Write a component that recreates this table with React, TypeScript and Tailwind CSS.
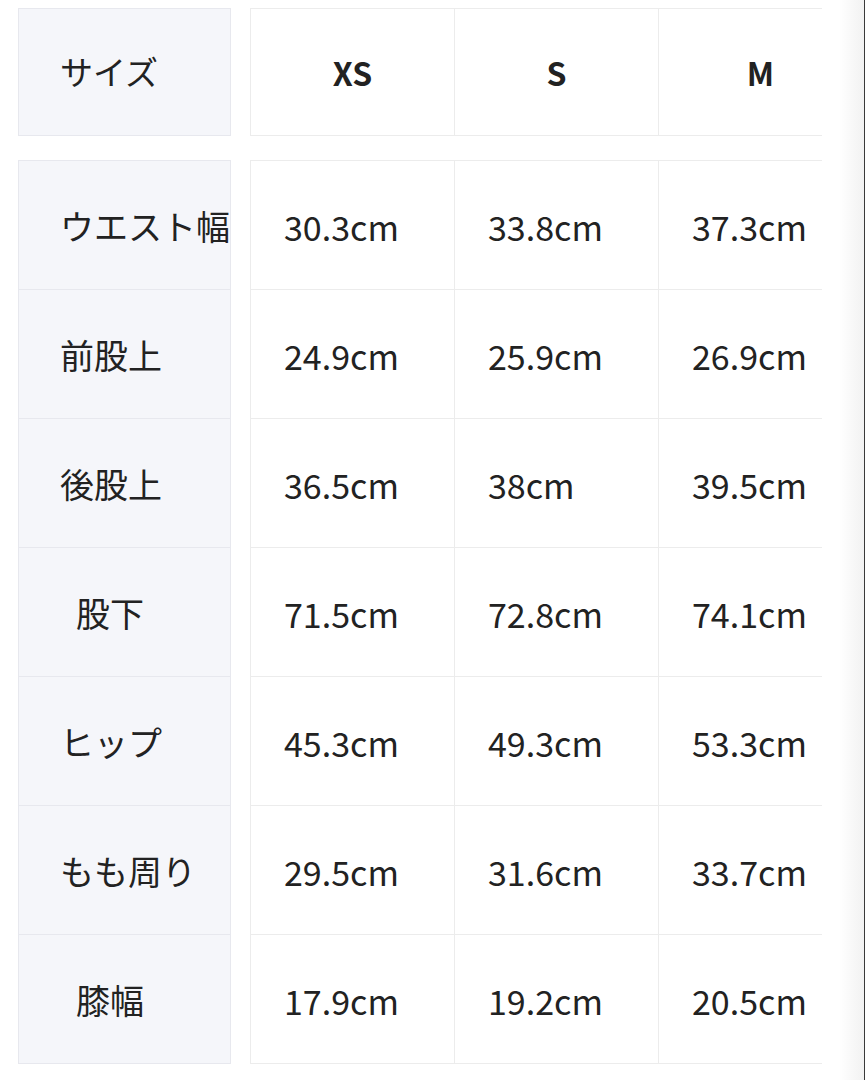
const sizes = ["XS", "S", "M"];

type Row = { label: string; values: string[] };

const rows: Row[] = [
  { label: "ウエスト幅", values: ["30.3cm", "33.8cm", "37.3cm"] },
  { label: "前股上", values: ["24.9cm", "25.9cm", "26.9cm"] },
  { label: "後股上", values: ["36.5cm", "38cm", "39.5cm"] },
  { label: "股下", values: ["71.5cm", "72.8cm", "74.1cm"] },
  { label: "ヒップ", values: ["45.3cm", "49.3cm", "53.3cm"] },
  { label: "もも周り", values: ["29.5cm", "31.6cm", "33.7cm"] },
  { label: "膝幅", values: ["17.9cm", "19.2cm", "20.5cm"] },
];

const font = { fontFamily: '"Noto Sans CJK JP", "Noto Sans", sans-serif' };

function LabelCell({ text }: { text: string }) {
  return (
    <div className="h-[129px] border-b border-[#e7e8ee] bg-[#f5f6fa] flex items-center overflow-hidden">
      <div className="ml-[41px] w-[100px] text-center whitespace-nowrap text-[34px] text-[#222]">
        {text}
      </div>
    </div>
  );
}

export default function App() {
  return (
    <div
      className="relative w-[865px] h-[1080px] bg-white overflow-hidden"
      style={font}
    >
      <div className="flex pt-[8px] pl-[18px] gap-[19px]">
        {/* fixed label column */}
        <div className="w-[213px] flex flex-col">
          <div className="border border-[#e7e8ee] bg-[#f5f6fa] h-[128px] flex items-center">
            <span className="ml-[41px] text-[33px] text-[#222]">サイズ</span>
          </div>
          <div className="mt-[24px] border-t border-x border-[#e7e8ee]">
            {rows.map((r) => (
              <LabelCell key={r.label} text={r.label} />
            ))}
          </div>
        </div>

        {/* scrollable values */}
        <div className="w-[572px] overflow-hidden">
          <div className="w-[620px]">
            <div className="flex h-[128px] border-y border-l border-[#ececec]">
              {sizes.map((s) => (
                <div
                  key={s}
                  className="w-[204px] shrink-0 border-r border-[#ececec] flex items-center justify-center text-[32px] font-bold text-[#222]"
                >
                  {s}
                </div>
              ))}
            </div>
            <div className="mt-[24px] border-t border-l border-[#ececec]">
              {rows.map((r) => (
                <div key={r.label} className="flex h-[129px] border-b border-[#ececec]">
                  {r.values.map((v, i) => (
                    <div
                      key={i}
                      className="w-[204px] shrink-0 border-r border-[#ececec] flex items-center pl-[33px] pt-[3px] text-[34px] text-[#222]"
                    >
                      {v}
                    </div>
                  ))}
                </div>
              ))}
            </div>
          </div>
        </div>
      </div>

      {/* screen edge */}
      <div className="absolute top-0 right-0 h-full w-[26px] bg-gradient-to-r from-white to-[#f2f2f2] border-r border-[#3a3a3a]" />
    </div>
  );
}
